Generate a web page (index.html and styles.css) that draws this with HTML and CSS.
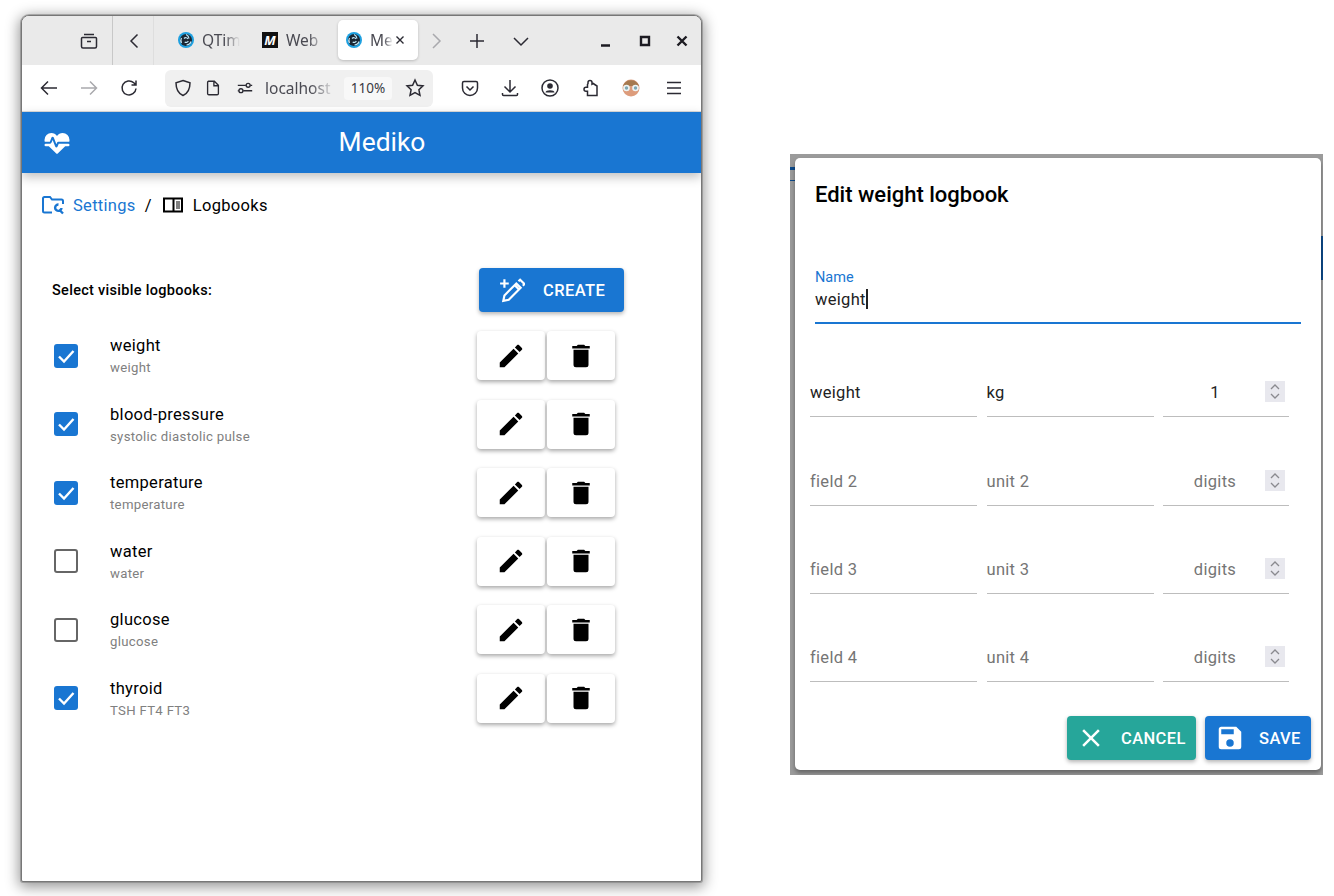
FILE: index.html
```html
<!DOCTYPE html>
<html>
  <head>
    <title>Mediko</title>
    <link rel="stylesheet" href="styles.css">
  </head>
  <body>
    <!-- shared icons -->
    <svg class="defs">
      <symbol id="i-pencil" viewBox="0 0 24 24"><path d="M20.710,7.040C21.100,6.650 21.100,6 20.710,5.630L18.370,3.290C18,2.900 17.350,2.900 16.960,3.290L15.120,5.120L18.870,8.870M3,17.250V21H6.750L17.810,9.930L14.060,6.180L3,17.250Z"/></symbol>
      <symbol id="i-delete" viewBox="0 0 24 24"><path d="M19,4H15.500L14.500,3H9.500L8.500,4H5V6H19M6,19A2,2 0 0,0 8,21H16A2,2 0 0,0 18,19V7H6V19Z"/></symbol>
      <symbol id="i-check" viewBox="0 0 24 24"><path d="M5 12.500l5 5L19.500 7"/></symbol>
      <symbol id="i-spin" viewBox="0 0 20 21"><path d="M6 8l4-4 4 4M6 13l4 4 4-4"/></symbol>
      <symbol id="i-qt" viewBox="0 0 16 16">
        <circle cx="8" cy="8" r="8" fill="#1ea0e0"/>
        <circle cx="8" cy="8" r="6" fill="#1b2733"/>
        <path d="M8 2.500a5 5 0 0 1 3 4M13 9.500a5 5 0 0 1-4.500 3.500M3.500 11a5 5 0 0 1 0-5M6 6.500a2.500 2.500 0 0 1 4 .5M10.300 9a2.500 2.500 0 0 1-3.600 1" fill="none" stroke="#bfe6f7" stroke-width="1.200"/>
      </symbol>
    </svg>

    <!-- browser window -->
    <div class="window">
      <div class="tabbar">
        <span class="slot archive-slot">
          <svg class="ico" viewBox="0 0 20 20"><path d="M5 3.500h10M3.500 6.500h13a1 1 0 0 1 1 1v8a1.500 1.500 0 0 1-1.500 1.500H4a1.500 1.500 0 0 1-1.500-1.500v-8a1 1 0 0 1 1-1zM8 10.500h4"/></svg>
        </span>
        <span class="slot scroll-left">
          <svg class="ico" viewBox="0 0 20 20"><path d="M14.500 3.500L8 10l6.500 6.500"/></svg>
        </span>
        <div class="tab tab-first">
          <svg class="favicon"><use href="#i-qt"/></svg>
          <span class="tab-text">QTim</span>
        </div>
        <div class="tab tab-second">
          <span class="favicon-m">M</span>
          <span class="tab-text">Web</span>
        </div>
        <div class="tab tab-active">
          <svg class="favicon"><use href="#i-qt"/></svg>
          <span class="tab-text short">Me</span>
          <svg class="ico tab-close" viewBox="0 0 20 20"><path d="M5 5l10 10M15 5L5 15"/></svg>
        </div>
        <span class="slot scroll-right">
          <svg class="ico faint" viewBox="0 0 20 20"><path d="M7 3l7 7-7 7"/></svg>
        </span>
        <span class="slot new-tab">
          <svg class="ico" viewBox="0 0 20 20"><path d="M10 3v14M3 10h14"/></svg>
        </span>
        <span class="slot tab-list">
          <svg class="ico" viewBox="0 0 20 20"><path d="M3 7l7 7 7-7"/></svg>
        </span>
        <span class="slot win-min">
          <svg class="ico heavy" viewBox="0 0 20 20"><path d="M5 14.500h9"/></svg>
        </span>
        <span class="slot win-max">
          <svg class="ico heavy" viewBox="0 0 20 20"><path d="M6 6h8v8H6z"/></svg>
        </span>
        <span class="slot win-close">
          <svg class="ico heavy" viewBox="0 0 20 20"><path d="M5.500 5.500l9 9M14.500 5.500l-9 9"/></svg>
        </span>
      </div>

      <div class="toolbar">
        <span class="slot tool">
          <svg class="ico" viewBox="0 0 20 20"><path d="M18 10H2.500M9 3.500L2.500 10 9 16.500"/></svg>
        </span>
        <span class="slot tool">
          <svg class="ico faint" viewBox="0 0 20 20"><path d="M2 10h15.500M11 3.500l6.500 6.500-6.500 6.500"/></svg>
        </span>
        <span class="slot tool">
          <svg class="ico" viewBox="0 0 20 20"><path d="M17 10.500a7 7 0 1 1-2.200-5.700L17 7M17 2.500V7h-4.500"/></svg>
        </span>
        <div class="urlbar">
          <svg class="ico shield" viewBox="0 0 20 20"><path d="M10 2.500l7 2.300c0 6-1.500 10.500-7 12.700-5.500-2.200-7-6.700-7-12.700z"/></svg>
          <svg class="ico page" viewBox="0 0 20 20"><path d="M5 2.500h6.500L16 7v9a1.500 1.500 0 0 1-1.500 1.500h-9A1.500 1.500 0 0 1 4 16V4a1.500 1.500 0 0 1 1-1.500zM11 2.500V7.500h5"/></svg>
          <svg class="ico perms" viewBox="0 0 20 20"><path d="M2 7h9M16 7h2M8 13h10M2 13h1"/><circle cx="13.500" cy="7" r="2.200"/><circle cx="5.500" cy="13" r="2.200"/></svg>
          <span class="url-text">localhost</span>
          <span class="zoom-box">110%</span>
          <svg class="ico star" viewBox="0 0 20 20"><path d="M10 2l2.400 5.200 5.600.7-4.100 3.900 1.100 5.600-5-2.800-5 2.800 1.100-5.600L2 7.900l5.600-.7z"/></svg>
        </div>
        <span class="slot tool first-right">
          <svg class="ico" viewBox="0 0 20 20"><path d="M4 3.500h12A1.500 1.500 0 0 1 17.500 5v5a7.500 7.500 0 0 1-15 0V5A1.500 1.500 0 0 1 4 3.500zM6.500 8.500L10 12l3.500-3.500"/></svg>
        </span>
        <span class="slot tool">
          <svg class="ico" viewBox="0 0 20 20"><path d="M10 2v11.500M4.500 8.500l5.500 5.500 5.500-5.500M2.500 15v1.500a1 1 0 0 0 1 1h13a1 1 0 0 0 1-1V15"/></svg>
        </span>
        <span class="slot tool">
          <svg class="ico" viewBox="0 0 20 20"><circle cx="10" cy="10" r="8"/><circle class="solid" cx="10" cy="8" r="2.800"/><path class="solid" d="M5.500 14.500c0-1.500 2-2.200 4.500-2.200s4.500.7 4.500 2.200z"/></svg>
        </span>
        <span class="slot tool">
          <svg class="ico" viewBox="0 0 20 20"><path d="M8 5.500V4.500a2 2 0 0 1 4 0v1.700l1.200-.7L17 8v9.500H7.500v-4.200H6a2 2 0 0 1 0-4h1.500V6.500z"/></svg>
        </span>
        <span class="slot tool avatar-slot">
          <svg class="avatar" viewBox="0 0 20 20">
            <circle cx="10" cy="10" r="8.500" fill="#dd9c7c"/>
            <path d="M2 8a8.500 8.500 0 0 1 16 0z" fill="#a5794f"/>
            <circle cx="5.500" cy="10" r="3.300" fill="#eef4f4"/>
            <circle cx="14.500" cy="10" r="3.300" fill="#eef4f4"/>
            <circle cx="5.500" cy="10" r="1.700" fill="#7fa8b4"/>
            <circle cx="14.500" cy="10" r="1.700" fill="#7fa8b4"/>
          </svg>
        </span>
        <span class="slot tool menu-slot">
          <svg class="ico" viewBox="0 0 20 20"><path d="M3 4.500h14M3 10h14M3 15.500h14"/></svg>
        </span>
      </div>

      <header class="appbar">
        <svg class="mdi heart" viewBox="0 0 24 24"><path d="M7.500,4A5.500,5.500 0 0,0 2,9.500C2,10 2.090,10.500 2.220,11H6.300L7.570,7.630C7.870,6.830 9.050,6.750 9.430,7.630L11.500,13L12.090,11.580C12.220,11.250 12.570,11 13,11H21.780C21.910,10.500 22,10 22,9.500A5.500,5.500 0 0,0 16.500,4C14.640,4 13,4.930 12,6.340C11,4.930 9.360,4 7.500,4V4M3,12.500A1,1 0 0,0 2,13.500A1,1 0 0,0 3,14.500H5.440L11,20C12,20.900 12,20.900 13,20L18.560,14.500H21A1,1 0 0,0 22,13.500A1,1 0 0,0 21,12.500H13.400L12.470,14.800C12.070,15.810 10.920,15.670 10.550,14.830L8.500,9.500L7.540,11.830C7.390,12.210 7.050,12.500 6.600,12.500H3Z"/></svg>
        <div class="app-title">Mediko</div>
      </header>

      <main class="page-body">
        <nav class="crumbs">
          <svg class="crumb-ico blue" viewBox="0 0 24 24"><path d="M11 19.500H3.500A1.500 1.500 0 0 1 2 18V5.500A1.500 1.500 0 0 1 3.500 4H9l2 2.500h9.500A1.500 1.500 0 0 1 22 8v3"/><path class="wrench" d="M17.500 11.500a3.200 3.200 0 1 0 3 3.500M18 16.500l4 4"/></svg>
          <a class="crumb-link">Settings</a>
          <span class="crumb-sep">/</span>
          <svg class="crumb-ico" viewBox="0 0 24 24"><path d="M3 5.500h18v13H3zM12.500 5.500v13"/><path class="thin" d="M15 9h4M15 11h4M15 13h4M15 15h4"/></svg>
          <span class="crumb-current">Logbooks</span>
        </nav>

        <div class="list-head">
          <div class="select-label">Select visible logbooks:</div>
          <button class="btn btn-blue btn-create">
            <svg class="mdi-line" viewBox="0 0 24 24"><path d="M5 2v8M1 6h8M4 22l1-5L16 6l4 4L9 21zM14.500 7.500l4 4M18 4l1.500-1.500 4 4L22 8"/></svg>
            <span>CREATE</span>
          </button>
        </div>

        <div class="logbooks">
          <div class="row">
            <span class="check on"><svg><use href="#i-check"/></svg></span>
            <div class="row-text"><div class="row-name">weight</div><div class="row-sub">weight</div></div>
            <div class="row-actions">
              <button class="btn-white"><svg class="mdi"><use href="#i-pencil"/></svg></button>
              <button class="btn-white"><svg class="mdi"><use href="#i-delete"/></svg></button>
            </div>
          </div>
          <div class="row">
            <span class="check on"><svg><use href="#i-check"/></svg></span>
            <div class="row-text"><div class="row-name">blood-pressure</div><div class="row-sub">systolic diastolic pulse</div></div>
            <div class="row-actions">
              <button class="btn-white"><svg class="mdi"><use href="#i-pencil"/></svg></button>
              <button class="btn-white"><svg class="mdi"><use href="#i-delete"/></svg></button>
            </div>
          </div>
          <div class="row">
            <span class="check on"><svg><use href="#i-check"/></svg></span>
            <div class="row-text"><div class="row-name">temperature</div><div class="row-sub">temperature</div></div>
            <div class="row-actions">
              <button class="btn-white"><svg class="mdi"><use href="#i-pencil"/></svg></button>
              <button class="btn-white"><svg class="mdi"><use href="#i-delete"/></svg></button>
            </div>
          </div>
          <div class="row">
            <span class="check"></span>
            <div class="row-text"><div class="row-name">water</div><div class="row-sub">water</div></div>
            <div class="row-actions">
              <button class="btn-white"><svg class="mdi"><use href="#i-pencil"/></svg></button>
              <button class="btn-white"><svg class="mdi"><use href="#i-delete"/></svg></button>
            </div>
          </div>
          <div class="row">
            <span class="check"></span>
            <div class="row-text"><div class="row-name">glucose</div><div class="row-sub">glucose</div></div>
            <div class="row-actions">
              <button class="btn-white"><svg class="mdi"><use href="#i-pencil"/></svg></button>
              <button class="btn-white"><svg class="mdi"><use href="#i-delete"/></svg></button>
            </div>
          </div>
          <div class="row">
            <span class="check on"><svg><use href="#i-check"/></svg></span>
            <div class="row-text"><div class="row-name">thyroid</div><div class="row-sub">TSH FT4 FT3</div></div>
            <div class="row-actions">
              <button class="btn-white"><svg class="mdi"><use href="#i-pencil"/></svg></button>
              <button class="btn-white"><svg class="mdi"><use href="#i-delete"/></svg></button>
            </div>
          </div>
        </div>
      </main>
    </div>

    <!-- dialog capture -->
    <div class="backdrop">
      <span class="edge edge-left-a"></span>
      <span class="edge edge-left-b"></span>
      <span class="edge edge-right"></span>
      <div class="dialog">
        <h2 class="dialog-title">Edit weight logbook</h2>
        <div class="name-field">
          <label class="name-label">Name</label>
          <div class="name-value">weight<span class="caret"></span></div>
        </div>

        <div class="fields">
          <div class="field filled">weight</div>
          <div class="field filled">kg</div>
          <div class="field field-num filled"><span>1</span><svg class="spin"><use href="#i-spin"/></svg></div>

          <div class="field">field 2</div>
          <div class="field">unit 2</div>
          <div class="field field-num"><span>digits</span><svg class="spin"><use href="#i-spin"/></svg></div>

          <div class="field">field 3</div>
          <div class="field">unit 3</div>
          <div class="field field-num"><span>digits</span><svg class="spin"><use href="#i-spin"/></svg></div>

          <div class="field">field 4</div>
          <div class="field">unit 4</div>
          <div class="field field-num"><span>digits</span><svg class="spin"><use href="#i-spin"/></svg></div>
        </div>

        <div class="dialog-actions">
          <button class="btn btn-teal btn-cancel">
            <svg class="mdi" viewBox="0 0 24 24"><path d="M19,6.410L17.590,5L12,10.590L6.410,5L5,6.410L10.590,12L5,17.590L6.410,19L12,13.410L17.590,19L19,17.590L13.410,12L19,6.410Z"/></svg>
            <span>CANCEL</span>
          </button>
          <button class="btn btn-blue btn-save">
            <svg class="mdi" viewBox="0 0 24 24"><path d="M15,9H5V5H15M12,19A3,3 0 0,1 9,16A3,3 0 0,1 12,13A3,3 0 0,1 15,16A3,3 0 0,1 12,19M17,3H5C3.890,3 3,3.900 3,5V19A2,2 0 0,0 5,21H19A2,2 0 0,0 21,19V7L17,3Z"/></svg>
            <span>SAVE</span>
          </button>
        </div>
      </div>
    </div>
  </body>
</html>
```

FILE: styles.css
```css
body {
  margin: 0;
  height: 896px;
  overflow: hidden;
  background-color: #fff;
  font-family: Roboto, "Liberation Sans", sans-serif;
  color: #000;
}

.defs {
  position: absolute;
  width: 0;
  height: 0;
}

/* the two captures sit on a free canvas */
.window {
  position: absolute;
  left: 21px;
  top: 15px;
  width: 679px;
  height: 865px;
  background-color: #fff;
  border: 1px solid #777;
  border-radius: 8px 8px 2px 2px;
  box-shadow: 0 0 0 1px rgba(120, 120, 120, 0.5), 0 3px 14px 2px rgba(0, 0, 0, 0.42);
  overflow: hidden;
}

.ico {
  width: 20px;
  height: 20px;
  fill: none;
  stroke: #2b2a33;
  stroke-width: 1.5;
}
.ico.faint {
  stroke: #a9a9ad;
}
.ico.heavy {
  stroke: #1c1b22;
  stroke-width: 2.4;
}
.ico .solid {
  fill: #2b2a33;
  stroke: none;
}

.slot {
  display: flex;
  align-items: center;
  justify-content: center;
  flex: none;
}

/* tab strip */
.tabbar {
  display: flex;
  align-items: center;
  height: 49px;
  background-color: #eaeaea;
}
.archive-slot {
  width: 91px;
  height: 49px;
  padding-left: 44px;
  box-sizing: border-box;
  border-right: 1px solid #c8c8c8;
}
.scroll-left {
  width: 40px;
  height: 49px;
  border-right: 1px solid #dedede;
}
.tab {
  display: flex;
  align-items: center;
  flex: none;
  height: 40px;
  margin-bottom: 1px;
  box-sizing: border-box;
  font-family: "Noto Sans", sans-serif;
  font-size: 15.5px;
  color: #4a4a52;
}
.tab-first {
  width: 108px;
  padding-left: 24px;
}
.tab-second {
  width: 76px;
}
.tab-active {
  width: 80px;
  padding-left: 8px;
  background-color: #fff;
  border-radius: 5px;
  box-shadow: 0 1px 3px rgba(0, 0, 0, 0.2);
}
.favicon {
  flex: none;
  width: 16px;
  height: 16px;
}
.favicon-m {
  flex: none;
  width: 16px;
  height: 16px;
  line-height: 16px;
  text-align: center;
  font-size: 13px;
  font-style: italic;
  font-weight: 700;
  color: #fff;
  background-color: #111;
}
.tab-text {
  margin-left: 8px;
  width: 38px;
  white-space: nowrap;
  -webkit-mask-image: linear-gradient(to right, #000 60%, transparent);
  mask-image: linear-gradient(to right, #000 60%, transparent);
}
.tab-text.short {
  width: 23px;
}
.tab-close {
  flex: none;
  width: 14px;
  height: 14px;
  stroke-width: 2;
}
.scroll-right {
  width: 36px;
}
.new-tab {
  width: 46px;
}
.tab-list {
  width: 42px;
}
.win-min {
  width: 40px;
  margin-left: 44px;
}
.win-max {
  width: 38px;
}
.win-close {
  width: 36px;
}

/* url toolbar */
.toolbar {
  display: flex;
  align-items: center;
  height: 46px;
  padding-left: 7px;
  border-bottom: 1px solid #dcdcdc;
}
.tool {
  width: 40px;
  height: 40px;
}
.urlbar {
  display: flex;
  align-items: center;
  width: 268px;
  height: 37px;
  margin-left: 16px;
  padding-left: 8px;
  box-sizing: border-box;
  background-color: #f0f0f0;
  border-radius: 6px;
}
.shield {
  flex: none;
}
.page {
  flex: none;
  margin-left: 11px;
  width: 18px;
  height: 18px;
}
.perms {
  flex: none;
  margin-left: 14px;
  width: 18px;
  height: 18px;
}
.url-text {
  width: 70px;
  margin-left: 11px;
  font-family: "Noto Sans", sans-serif;
  font-size: 15.5px;
  color: #4a4a52;
  -webkit-mask-image: linear-gradient(to right, #000 65%, transparent);
  mask-image: linear-gradient(to right, #000 65%, transparent);
}
.zoom-box {
  margin-left: 9px;
  width: 48px;
  height: 23px;
  line-height: 23px;
  text-align: center;
  font-family: "Noto Sans", sans-serif;
  font-size: 13.5px;
  color: #3a3a42;
  background-color: #f8f8f8;
  border-radius: 4px;
}
.star {
  margin-left: 13px;
  flex: none;
}
.first-right {
  margin-left: 17px;
}
.avatar-slot {
  margin-left: 1px;
}
.avatar {
  width: 20px;
  height: 20px;
}
.menu-slot {
  margin-left: 3px;
}

/* app */
.appbar {
  position: relative;
  display: flex;
  align-items: center;
  justify-content: center;
  height: 61px;
  box-sizing: border-box;
  padding: 0 0 2px 41px;
  background-color: #1976d2;
  color: #fff;
  box-shadow: 0 4px 10px rgba(0, 0, 0, 0.25);
}
.mdi {
  width: 30px;
  height: 30px;
  fill: currentColor;
}
.heart {
  position: absolute;
  left: 20px;
  top: 16px;
}
.app-title {
  font-size: 26.4px;
}

.page-body {
  padding: 20px 0 0 21px;
}
.crumbs {
  display: flex;
  align-items: center;
  height: 24px;
  margin-left: -2px;
  font-size: 16.5px;
  letter-spacing: 0.3px;
}
.crumb-ico {
  width: 24px;
  height: 24px;
  fill: none;
  stroke: #000;
  stroke-width: 2;
  margin-right: 8px;
}
.crumb-ico .thin {
  stroke-width: 1;
}
.crumb-ico .wrench {
  stroke-width: 2.4;
}
.crumb-ico.blue {
  stroke: #1976d2;
}
.crumb-link {
  color: #1976d2;
}
.crumb-sep {
  margin: 0 9px;
}

.list-head {
  display: flex;
  align-items: center;
  height: 44px;
  margin-top: 51px;
}
.select-label {
  width: 427px;
  margin-left: 9px;
  font-size: 14.5px;
  font-weight: 500;
  letter-spacing: 0.3px;
}
.btn {
  display: flex;
  align-items: center;
  border: none;
  border-radius: 4px;
  height: 44px;
  padding: 0;
  color: #fff;
  font-family: inherit;
  font-size: 16.5px;
  font-weight: 500;
  letter-spacing: 0.4px;
  box-shadow: 0 2px 4px rgba(0, 0, 0, 0.3);
}
.btn-blue {
  background-color: #1976d2;
}
.btn-teal {
  background-color: #26a69a;
}
.btn-create {
  width: 145px;
  padding-left: 20px;
  gap: 18px;
}
.mdi-line {
  width: 26px;
  height: 26px;
  fill: none;
  stroke: #fff;
  stroke-width: 2;
}

.logbooks {
  margin-top: 9.45px;
}
.row {
  display: flex;
  align-items: center;
  height: 68.5px;
}
.check {
  flex: none;
  display: block;
  width: 24px;
  height: 24px;
  margin-left: 11px;
  box-sizing: border-box;
  border: 2px solid #666;
  border-radius: 3px;
}
.check.on {
  border: none;
  background-color: #1976d2;
}
.check svg {
  display: block;
  width: 24px;
  height: 24px;
  fill: none;
  stroke: #fff;
  stroke-width: 2.4;
}
.row-text {
  width: 367px;
  margin-left: 32px;
  padding-top: 1px;
}
.row-name {
  font-size: 16.5px;
  line-height: 22px;
  letter-spacing: 0.3px;
}
.row-sub {
  margin-top: 2px;
  font-size: 13.2px;
  line-height: 18px;
  letter-spacing: 0.3px;
  color: #808080;
}
.row-actions {
  display: flex;
  gap: 2px;
}
.btn-white {
  display: flex;
  align-items: center;
  justify-content: center;
  width: 68px;
  height: 49px;
  padding: 0;
  border: none;
  border-radius: 4px;
  background-color: #fff;
  color: #000;
  box-shadow: 0 2px 4px rgba(0, 0, 0, 0.35);
}

/* dialog capture */
.backdrop {
  position: absolute;
  left: 790px;
  top: 154px;
  width: 533px;
  height: 621px;
  overflow: hidden;
  background-color: #9b9b9b;
}
.edge {
  position: absolute;
  background-color: #0d4a8a;
}
.edge-left-a {
  left: 0;
  top: 13px;
  width: 5px;
  height: 3px;
}
.edge-left-b {
  left: 0;
  top: 26px;
  width: 5px;
  height: 1px;
}
.edge-right {
  left: 531px;
  top: 82px;
  width: 2px;
  height: 44px;
}
.dialog {
  position: absolute;
  left: 5px;
  top: 4px;
  width: 526px;
  height: 612px;
  box-sizing: border-box;
  padding: 23px 20px 0 20px;
  background-color: #fff;
  border-radius: 5px;
  box-shadow: 0 3px 4px rgba(0, 0, 0, 0.35);
}
.dialog-title {
  margin: 0;
  font-size: 22px;
  font-weight: 500;
  line-height: 28px;
}
.name-field {
  margin-top: 60px;
  height: 55px;
  box-sizing: border-box;
  border-bottom: 2px solid #1976d2;
}
.name-label {
  display: block;
  font-size: 14.5px;
  line-height: 18px;
  color: #1976d2;
}
.name-value {
  display: flex;
  align-items: center;
  height: 24px;
  font-size: 16.5px;
  letter-spacing: 0.3px;
  color: #222;
}
.caret {
  width: 2px;
  height: 20px;
  background-color: #222;
}

.fields {
  display: grid;
  grid-template-columns: 167px 167px 126px;
  column-gap: 9.5px;
  grid-auto-rows: 88.3px;
  margin: 5px 0 0 -5px;
}
.field {
  display: flex;
  align-items: center;
  height: 47px;
  padding-top: 2px;
  align-self: end;
  font-size: 16.5px;
  letter-spacing: 0.3px;
  color: #757575;
  border-bottom: 1px solid #bdbdbd;
}
.field.filled {
  color: #222;
}
.field-num {
  position: relative;
  justify-content: center;
  padding-right: 22px;
}
.spin {
  position: absolute;
  right: 4px;
  top: 14px;
  width: 20px;
  height: 21px;
  background-color: #e8e8ee;
  fill: none;
  stroke: #8a8a8f;
  stroke-width: 1.3;
}

.dialog-actions {
  display: flex;
  justify-content: flex-end;
  gap: 9px;
  margin: 34px -10px 0 0;
}
.btn-cancel {
  width: 129px;
  padding-left: 9px;
  gap: 15px;
}
.btn-save {
  width: 106px;
  padding-left: 10px;
  gap: 14px;
}
```
